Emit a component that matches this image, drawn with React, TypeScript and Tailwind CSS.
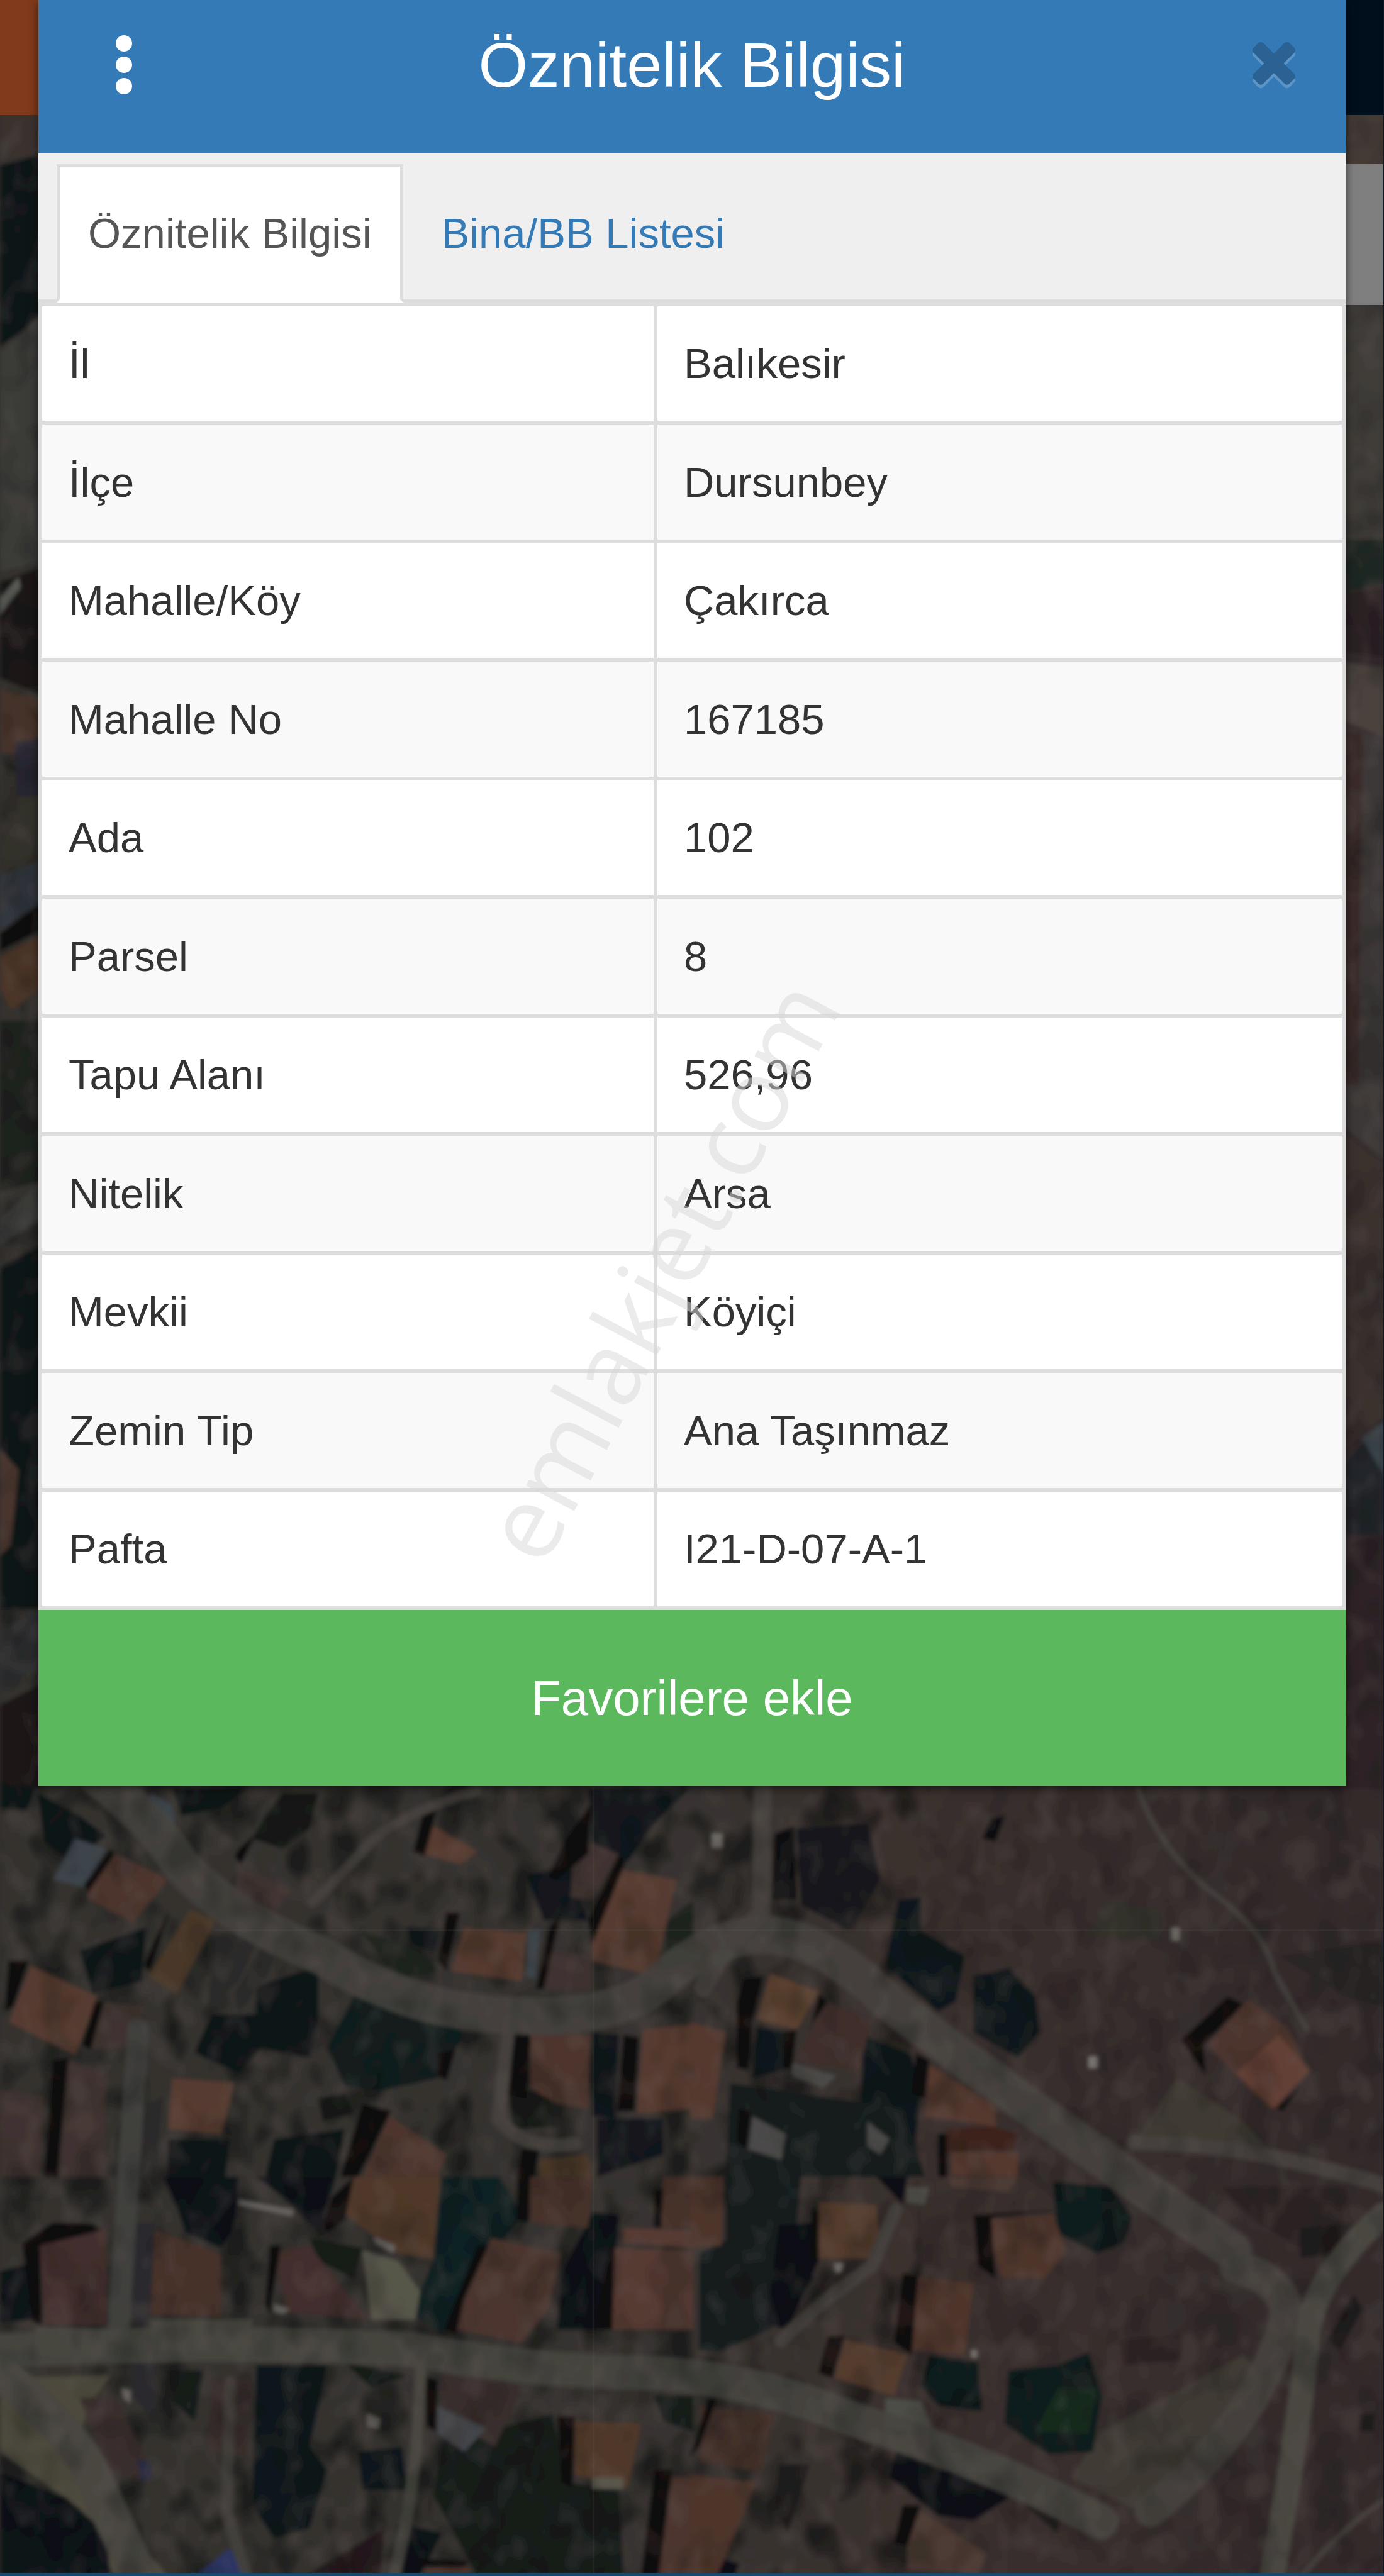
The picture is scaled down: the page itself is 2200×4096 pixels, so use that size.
import { useState } from 'react';

interface Shape {
  fill: string;
  points: string[];
}

interface Attribute {
  label: string;
  value: string;
}

const attributes: Attribute[] = [
  { label: 'İl', value: 'Balıkesir' },
  { label: 'İlçe', value: 'Dursunbey' },
  { label: 'Mahalle/Köy', value: 'Çakırca' },
  { label: 'Mahalle No', value: '167185' },
  { label: 'Ada', value: '102' },
  { label: 'Parsel', value: '8' },
  { label: 'Tapu Alanı', value: '526,96' },
  { label: 'Nitelik', value: 'Arsa' },
  { label: 'Mevkii', value: 'Köyiçi' },
  { label: 'Zemin Tip', value: 'Ana Taşınmaz' },
  { label: 'Pafta', value: 'I21-D-07-A-1' },
];

const tabs = ['Öznitelik Bilgisi', 'Bina/BB Listesi'];

// Satellite tiles: trees, roofs and shadows, each in its tile's own grid
const northWest: Shape[] = [
  { fill: '#0f1517', points: ['85,60 180,150 240,230 160,330 100,250', '0,20 80,40 60,130 0,120', '390,40 560,40 500,120 410,150', '480,930 580,930 590,1060 540,1160 440,1080', '580,820 720,740 720,950 700,1100 580,1060', '180,680 330,590 320,800 210,850', '620,1420 780,1380 760,1568 600,1568', '380,1420 520,1420 510,1568 380,1568'] },
  { fill: '#131814', points: ['640,60 720,60 700,200 640,280 570,240 600,150', '1150,1230 1240,1230 1260,1370 1160,1380', '720,1260 780,1240 800,1320 730,1350'] },
  { fill: '#12181b', points: ['1330,40 1560,40 1480,180 1420,330 1340,260', '1190,380 1290,350 1330,560 1230,560', '1350,1340 1500,1340 1500,1480 1350,1568', '1340,1000 1400,1010 1390,1340 1340,1330', '920,590 1000,600 980,690 930,650'] },
  { fill: '#121d1c', points: ['800,860 960,880 1050,1010 990,1180 860,1230 780,1210 740,1060'] },
  { fill: '#20251f', points: ['820,610 900,640 960,700 990,760 900,790', '1510,560 1568,480 1568,720 1500,760'] },
  { fill: '#2b2a29', points: ['490,610 590,610 540,800 470,900', '600,640 640,640 600,790 540,930 530,850', '270,1350 370,1250 350,1568 240,1568'] },
  { fill: '#4e362e', points: ['250,290 380,400 300,570 195,470', '880,1330 1010,1480 990,1568 820,1568', '1200,1010 1335,1010 1330,1300 1260,1280 1200,1220'] },
  { fill: '#4a3829', points: ['430,520 490,560 400,850 335,780', '1220,1500 1330,1480 1340,1568 1220,1568'] },
  { fill: '#3f3330', points: ['540,350 660,440 620,540 530,460', '1230,680 1340,700 1340,840 1225,830', '1300,230 1400,300 1340,480 1290,470', '230,880 330,900 290,1060 200,1060', '150,1110 240,1160 240,1568 135,1568', '0,1230 100,1250 90,1568 0,1568'] },
  { fill: '#573b30', points: ['980,190 1080,290 1040,340 960,300', '1400,360 1530,400 1480,780 1340,720 1340,650', '1050,590 1190,610 1180,800 1020,760', '70,740 220,860 170,1090 20,960', '1455,990 1568,970 1568,1300 1440,1320', '390,1180 530,1200 500,1400 380,1380'] },
  { fill: '#3c444b', points: ['170,240 240,280 190,430 120,400', '340,60 390,110 400,220 330,200', '1195,600 1222,600 1210,790 1190,780'] },
  { fill: '#0c0707', points: ['960,120 990,110 960,310 935,290', '1280,240 1338,100 1330,300 1260,400 1240,390', '1400,300 1415,330 1340,650 1330,560', '1010,530 1040,530 1010,760 990,720', '1240,600 1270,520 1230,830 1212,830', '540,280 580,220 545,340 530,310', '250,280 260,300 200,450 190,420', '360,600 385,520 340,760 325,740', '20,720 65,720 30,900 10,920', '215,880 235,880 205,1070 185,1050', '120,1110 155,1100 130,1568 100,1568', '1160,1000 1200,1010 1190,1260 1150,1250', '1410,1010 1445,1020 1435,1310 1395,1310', '820,1280 885,1310 810,1568 770,1568', '990,1080 1030,1070 1010,1190 990,1170', '1180,1460 1220,1460 1210,1568 1170,1568'] },
];

const northEast: Shape[] = [
  { fill: '#32312b', points: ['940,480 1060,520 1060,640 900,620'] },
  { fill: '#3f3a33', points: ['1100,1180 1250,1350 1300,1450 1000,1440'] },
  { fill: '#18191d', points: ['240,200 400,180 430,400 360,600 250,500'] },
  { fill: '#2a2626', points: ['1330,700 1568,640 1568,900 1480,860'] },
  { fill: '#0b0d0f', points: ['190,220 235,190 240,480 185,480', '680,160 710,150 690,250 660,240'] },
  { fill: '#10191b', points: ['470,480 520,470 520,600 620,700 600,880 560,920 440,740', '640,780 720,750 780,860 790,1000 740,1100 640,1000', '390,1010 500,1090 520,1250 500,1568 380,1568', '150,980 220,1000 230,1140 140,1180'] },
  { fill: '#141c1c', points: ['90,1200 480,1300 530,1568 80,1568'] },
  { fill: '#4b4a48', points: ['230,1120 330,1170 300,1220 230,1170', '140,1330 215,1400 205,1500 130,1460', '400,1350 450,1420 430,1480 400,1450'] },
  { fill: '#5b4130', points: ['180,770 290,840 240,990 150,950'] },
  { fill: '#402f2c', points: ['310,880 410,960 380,1150 240,1110 270,1000'] },
  { fill: '#54392f', points: ['540,1130 690,1290 690,1370 530,1330', '0,960 80,1000 50,1340 0,1340', '590,1470 740,1470 740,1568 590,1560'] },
  { fill: '#4c342d', points: ['1260,870 1350,980 1400,1160 1310,1300 1235,1170 1170,1050'] },
  { fill: '#633f35', points: ['1330,1010 1400,1150 1320,1300 1235,1160'] },
  { fill: '#3c221b', points: ['580,1380 680,1370 740,1400 730,1460 580,1470'] },
  { fill: '#0d0707', points: ['1215,860 1250,890 1160,1050 1165,1170 1110,1030', '120,790 165,780 140,960 130,1150 105,1140 105,880', '290,850 310,880 270,980 270,1000', '510,1080 540,1110 530,1260 500,1240', '560,1400 580,1400 580,1568 560,1568', '1380,1210 1340,1310 1325,1300', '210,1000 240,990 230,1140 210,1140', '110,1300 135,1310 125,1460 105,1430'] },
  { fill: '#77736e', points: ['900,1095 920,1095 920,1140 900,1140', '1088,590 1106,590 1106,640 1088,640', '48,220 72,220 72,275 48,275'] },
];

const southWest: Shape[] = [
  { fill: '#4d4a3d', points: ['0,790 250,780 200,900 180,1010 240,1300 380,1568 260,1568 180,1300 0,1080'] },
  { fill: '#48473f', points: ['340,560 570,560 570,700 340,680', '80,590 240,600 240,720 80,700'] },
  { fill: '#0d1217', points: ['370,0 540,0 530,200 500,280 420,220 400,120', '1340,140 1400,150 1380,600 1260,600 1270,380', '0,370 70,340 90,560 0,570', '0,1160 150,1260 240,1400 250,1568 0,1568', '900,1360 1000,1400 950,1568 890,1568', '580,0 760,0 720,220 640,80'] },
  { fill: '#102021', points: ['1000,0 1130,0 1180,150 1040,480 1000,620 930,540 980,330'] },
  { fill: '#141b19', points: ['380,760 460,760 440,960 390,880', '700,240 820,280 800,400 720,330', '780,730 920,780 840,830', '1000,1050 1250,930 1280,1200 1400,1230 1410,1568 1080,1568 980,1250', '1480,860 1568,860 1568,1000 1500,960'] },
  { fill: '#10181a', points: ['580,740 740,740 700,1060 740,1150 700,1380 620,1420 570,1290', '810,1080 910,1060 920,1230 820,1230'] },
  { fill: '#503829', points: ['800,0 995,0 980,320 900,300 775,140', '1300,960 1450,970 1420,1220 1300,1170'] },
  { fill: '#432f2d', points: ['90,260 240,200 240,580 100,580', '620,300 700,270 830,560 650,530'] },
  { fill: '#47322b', points: ['350,210 450,270 500,310 500,550 340,540', '1195,0 1340,0 1330,200 1200,180', '1500,0 1568,0 1568,200 1490,200'] },
  { fill: '#4c362f', points: ['1110,240 1270,300 1240,520 1180,650 1035,600 1050,480', '1520,1180 1568,1180 1568,1568 1490,1568', '960,1540 1060,1530 1060,1568 960,1568'] },
  { fill: '#553a33', points: ['1390,280 1568,290 1568,600 1385,600', '1410,200 1568,210 1568,280 1410,260'] },
  { fill: '#392e2d', points: ['1000,730 1180,830 1120,1060 1000,940', '180,870 260,860 330,1100 340,1200 240,1150', '480,790 570,790 560,1100 470,1080'] },
  { fill: '#241a1b', points: ['690,1568 870,1380 860,1568'] },
  { fill: '#2a2a2e', points: ['290,180 350,180 340,540 320,610 295,540', '300,700 350,720 350,960 300,860'] },
  { fill: '#57564a', points: ['820,290 900,330 950,450 940,560 840,560', '1340,1180 1410,1180 1410,1225 1340,1225'] },
  { fill: '#66625f', points: ['540,90 665,130 660,155 540,110', '845,235 895,270 890,300 850,260', '830,930 860,950 855,990 830,980', '275,830 295,840 295,890 280,870', '620,500 655,520 640,540 620,530'] },
  { fill: '#45474b', points: ['990,900 1100,990 1050,1080 990,1010', '1480,1270 1510,1260 1490,1440 1470,1430'] },
  { fill: '#2c3563', points: ['440,1568 520,1460 560,1568'] },
  { fill: '#262840', points: ['310,1110 340,1120 345,1180 320,1200'] },
  { fill: '#0d0809', points: ['730,180 750,80 800,0 780,170 740,220', '50,260 120,180 210,185 230,210 90,270 95,580 75,570', '610,270 635,270 610,540 600,500', '1080,270 1105,270 1050,480 1030,620 1005,600', '1380,280 1390,290 1385,600 1345,590', '1170,0 1200,0 1195,180 1170,170', '960,780 990,800 985,1000 965,980', '1260,940 1300,940 1295,1220 1270,1200', '1480,1150 1520,1150 1490,1568 1450,1568', '950,1500 1060,1510 1050,1530 950,1530', '970,690 1005,700 990,760 960,760', '1480,50 1500,50 1495,200 1480,200'] },
];

const southEast: Shape[] = [
  { fill: '#3f3a34', points: ['930,1000 1250,700 1300,800 1000,1300 860,1180'] },
  { fill: '#2c2323', points: ['1200,40 1480,40 1500,180 1400,300 1280,180', '970,640 1110,620 1110,720 980,740'] },
  { fill: '#141c1d', points: ['80,0 250,0 240,200 280,400 180,600 60,690 20,680 20,300 80,250'] },
  { fill: '#0b1013', points: ['200,190 280,180 290,330 220,600 170,580', '470,1050 560,1150 700,1180 720,1260 640,1350 560,1330 450,1180', '0,1460 110,1520 100,1568 10,1568', '420,0 490,0 480,110'] },
  { fill: '#101b1b', points: ['820,20 950,40 1000,160 980,260 920,300 830,220', '540,700 650,730 660,920 560,900 520,820', '720,760 830,740 900,690 930,860 910,1080 810,1090 710,970'] },
  { fill: '#152a1e', points: ['830,830 920,830 900,1010 780,1000'] },
  { fill: '#1f1c1c', points: ['1380,200 1500,180 1460,300 1380,320', '340,990 420,1020 400,1090', '750,1280 840,1300 830,1400', '1440,640 1500,460 1520,520 1470,680', '200,1130 270,1130 220,1400 190,1300', '1515,930 1545,930 1545,1000 1515,1000'] },
  { fill: '#553c2e', points: ['290,100 420,110 430,320 290,320', '350,640 490,700 460,860 325,790'] },
  { fill: '#4e352c', points: ['670,170 820,150 850,290 800,400 700,390', '510,390 640,420 620,700 500,680', '0,1170 150,1200 60,1568 0,1568', '0,0 75,0 70,270 0,280'] },
  { fill: '#4d3a34', points: ['520,1310 670,1480 650,1560 490,1540 490,1450', '580,0 740,0 720,60 590,40'] },
  { fill: '#42302a', points: ['20,900 190,930 160,1160 20,1120'] },
  { fill: '#0e0808', points: ['640,150 830,130 680,160 690,400 650,350', '480,380 515,390 500,700 460,650', '310,630 350,620 320,790 290,770', '480,1290 520,1290 490,1450 460,1440', '275,120 290,140 290,340 270,300', '40,870 60,870 20,1060 0,1100'] },
  { fill: '#4d4d47', points: ['490,40 540,40 530,110 490,100', '440,870 520,880 550,1000 440,990', '560,1080 720,1100 690,1160 590,1150'] },
  { fill: '#77736e', points: ['325,340 345,340 340,375 328,375', '635,680 648,680 648,710 635,710'] },
];

const westEdge: Shape[] = [
  { fill: '#3a322f', points: ['0,0 220,0 220,40 0,45'] },
  { fill: '#0d1417', points: ['0,50 220,40 220,190 0,220'] },
  { fill: '#3b3b38', points: ['0,225 220,190 220,420 0,430'] },
  { fill: '#1a1516', points: ['0,440 220,425 220,545 0,530'] },
  { fill: '#5a5c57', points: ['0,455 100,435 110,445 0,470'] },
  { fill: '#46322a', points: ['0,540 220,550 220,600 0,600'] },
  { fill: '#33302c', points: ['0,610 220,630 220,715 0,720'] },
  { fill: '#2a2833', points: ['80,590 220,585 220,640 90,640'] },
  { fill: '#33373f', points: ['0,715 220,700 220,740 0,765'] },
  { fill: '#0c0808', points: ['0,768 220,740 220,765 0,785'] },
  { fill: '#4a3427', points: ['0,790 220,770 220,820 60,840 0,820'] },
  { fill: '#1e201d', points: ['0,850 220,850 220,1000 0,1010'] },
  { fill: '#3b3b39', points: ['0,1035 220,1000 220,1035 0,1060'] },
  { fill: '#0f1517', points: ['0,1080 220,1060 220,1400 0,1400'] },
  { fill: '#48352e', points: ['0,1250 100,1270 60,1340 0,1350'] },
  { fill: '#2c2e2f', points: ['0,1420 220,1400 220,1450 0,1480'] },
  { fill: '#1d1817', points: ['0,1490 220,1470 220,1568 0,1568'] },
];

const eastEdge: Shape[] = [
  { fill: '#443a35', points: ['30,0 240,0 240,60 30,60'] },
  { fill: '#3f3c38', points: ['30,180 240,180 240,400 30,400'] },
  { fill: '#202823', points: ['30,400 240,400 240,440 30,450'] },
  { fill: '#2b2124', points: ['30,450 240,445 240,510 30,505'] },
  { fill: '#4a423d', points: ['30,515 240,520 240,585 30,570'] },
  { fill: '#3d3837', points: ['30,575 240,585 240,980 30,950'] },
  { fill: '#3a2b29', points: ['30,580 125,580 100,910 30,910'] },
  { fill: '#3a302e', points: ['30,955 240,985 240,1220 30,1250'] },
  { fill: '#22252a', points: ['30,1265 240,1220 240,1330 30,1330'] },
  { fill: '#39434a', points: ['120,1240 240,1225 240,1275'] },
  { fill: '#2e2427', points: ['30,1340 240,1330 240,1568 30,1568'] },
];

function Tile({ shapes, transform }: { shapes: Shape[]; transform: string }) {
  return (
    <g transform={transform}>
      {shapes.map((shape) =>
        shape.points.map((points) => <polygon key={points} points={points} fill={shape.fill} />)
      )}
    </g>
  );
}

function SatelliteMap() {
  return (
    <svg
      className="absolute inset-0 h-full w-full"
      viewBox="0 0 842 1568"
      preserveAspectRatio="none"
      aria-hidden="true"
    >
      <defs>
        <linearGradient id="ground" x1="0" x2="1" y1="0" y2="0">
          <stop offset="0" stopColor="#34322f" />
          <stop offset="0.5" stopColor="#373330" />
          <stop offset="0.65" stopColor="#3a302e" />
          <stop offset="1" stopColor="#342b2c" />
        </linearGradient>
        <filter id="soften" x="0" y="0" width="1" height="1">
          <feGaussianBlur stdDeviation="1.3" />
        </filter>
        <filter id="darkGrain" x="0" y="0" width="1" height="1" colorInterpolationFilters="sRGB">
          <feTurbulence type="fractalNoise" baseFrequency="0.045 0.035" numOctaves="2" seed="4" />
          <feColorMatrix values="0 0 0 0 0.05  0 0 0 0 0.06  0 0 0 0 0.06  4 0 0 0 -1.9" />
        </filter>
        <filter id="lightGrain" x="0" y="0" width="1" height="1" colorInterpolationFilters="sRGB">
          <feTurbulence type="fractalNoise" baseFrequency="0.07 0.05" numOctaves="2" seed="11" />
          <feColorMatrix values="0 0 0 0 0.42  0 0 0 0 0.37  0 0 0 0 0.35  4 0 0 0 -2" />
        </filter>
      </defs>
      <rect width="842" height="1568" fill="url(#ground)" />
      <g filter="url(#soften)">
        <rect width="842" height="1568" fill="url(#ground)" />
        <rect width="560" height="1568" filter="url(#darkGrain)" opacity="0.45" />
        <Tile shapes={westEdge} transform="translate(0 68) scale(0.1134 0.651)" />
        <Tile shapes={eastEdge} transform="translate(814.8 68) scale(0.1134 0.651)" />
        <Tile shapes={northWest} transform="translate(0 1082) scale(0.269 0.155)" />
        <Tile shapes={northEast} transform="translate(420.1 1082) scale(0.269 0.155)" />
        <Tile shapes={southWest} transform="translate(0 1325) scale(0.269 0.155)" />
        <Tile shapes={southEast} transform="translate(420.1 1325) scale(0.269 0.155)" />
        <g fill="none" strokeLinecap="round" strokeLinejoin="round">
          <g stroke="#484640">
            <path d="M0 1445 Q45 1480 58 1510 T85 1568" strokeWidth="22" />
            <path d="M842 1348 Q800 1385 796 1420 Q790 1480 774 1568" strokeWidth="15" />
            <path d="M752 1380 Q790 1390 780 1420 Q760 1480 700 1528" strokeWidth="20" strokeOpacity="0.8" />
            <path d="M256 1440 Q254 1500 246 1540 L240 1568" strokeWidth="7" />
            <path d="M140 1450 L138 1530 L150 1568" strokeWidth="7" strokeOpacity="0.7" />
          </g>
          <g stroke="#45413d">
            <path d="M290 1090 Q240 1105 222 1125 T190 1158" strokeWidth="6" />
            <path d="M464 1090 L463 1165 Q440 1185 428 1210" strokeWidth="11" />
            <path d="M842 1330 Q800 1318 770 1312 T690 1304" strokeWidth="9" />
            <path d="M475 1425 Q500 1400 530 1380 L545 1345" strokeWidth="8" />
            <path d="M692 1088 Q705 1125 735 1150 Q770 1175 775 1200 L795 1235" strokeWidth="3" />
            <path d="M842 1522 Q815 1540 792 1568" strokeWidth="3" />
            <path d="M310 1230 L303 1290 Q320 1310 350 1305" strokeWidth="8" />
          </g>
          <path d="M84 1235 Q78 1330 72 1420" stroke="#403f3d" strokeWidth="13" />
          <path
            d="M60 1082 Q95 1110 110 1135 Q140 1168 195 1190 Q245 1222 300 1226 Q370 1232 400 1208 Q435 1175 470 1178 Q500 1180 540 1218 Q600 1265 750 1370"
            stroke="#464440"
            strokeOpacity="0.85"
            strokeWidth="23"
          />
          <path
            d="M0 1431 Q120 1424 250 1430 Q310 1442 380 1444 Q450 1444 520 1473 Q600 1498 670 1535"
            stroke="#474640"
            strokeOpacity="0.9"
            strokeWidth="21"
          />
        </g>
        <rect width="842" height="1568" filter="url(#darkGrain)" opacity="0.22" />
        <rect width="842" height="1568" filter="url(#lightGrain)" opacity="0.2" />
      </g>
      <path d="M361 1088 V1568 M130 1175 H842" stroke="#6b6864" strokeOpacity="0.12" fill="none" />
    </svg>
  );
}

function CloseIcon() {
  return (
    <svg className="h-[68px] w-[68px] overflow-visible" viewBox="110 -1322 1188 1188" aria-hidden="true">
      {[100, 0].map((offset) => (
        <path
          key={offset}
          transform={`translate(0 ${offset - 84})`}
          fill={offset ? '#5c95c6' : '#296293'}
          d="M1298 -322q0 40 -28 68l-136 136q-28 28 -68 28t-68 -28l-294 -294l-294 294q-28 28 -68 28t-68 -28l-136 -136q-28 -28 -28 -68t28 -68l294 -294l-294 -294q-28 -28 -28 -68t28 -68l136 -136q28 -28 68 -28t68 28l294 294l294 -294q28 -28 68 -28t68 28l136 136q28 28 28 68t-28 68l-294 294l294 294q28 28 28 68z"
        />
      ))}
    </svg>
  );
}

export default function App() {
  const [activeTab, setActiveTab] = useState(tabs[0]);

  return (
    <div className="relative min-h-screen overflow-hidden bg-[#332e2c] font-['Liberation_Sans',Arial,sans-serif]">
      <SatelliteMap />

      {/* dimmed page behind the dialog */}
      <div className="absolute inset-x-0 top-0 flex h-[183px]">
        <div className="flex-1 bg-[#813a1b]" />
        <div className="flex-1 bg-[#010f1c]" />
      </div>
      <div className="absolute top-[261px] right-0 h-[224px] w-[400px] bg-[#7f7f7f]" />
      <div className="absolute inset-y-0 right-0 w-px bg-[#0c1a28]" />
      <div className="absolute inset-x-0 bottom-0 h-1 bg-[#164970]" />

      <div role="dialog" aria-labelledby="dialog-title" className="relative mx-[61px] shadow-[0_4px_14px_rgba(0,0,0,0.6)]">
        <header className="grid grid-cols-[1fr_auto_1fr] bg-[#337ab7] pt-[30px] pr-20 pb-[68px] pl-[123px]">
          <button type="button" aria-label="Menü" className="flex items-center justify-self-start">
            <svg className="h-[94px] w-[26px]" viewBox="0 0 26 94" fill="#fff" aria-hidden="true">
              <circle cx="13" cy="13" r="13" />
              <circle cx="13" cy="47" r="13" />
              <circle cx="13" cy="81" r="13" />
            </svg>
          </button>
          <h1 id="dialog-title" className="pr-[43px] text-[101px] leading-[146px] text-white">
            Öznitelik Bilgisi
          </h1>
          <button type="button" aria-label="Kapat" className="flex items-center justify-self-end">
            <CloseIcon />
          </button>
        </header>

        <div role="tablist" className="flex gap-[11px] border-b-[5px] border-[#ddd] bg-[#efefef] pt-[17px] pl-[29px]">
          {tabs.map((tab) => (
            <button
              key={tab}
              type="button"
              role="tab"
              aria-selected={tab === activeTab}
              onClick={() => setActiveTab(tab)}
              className={`-mb-[5px] border-[5px] px-[45px] py-14 text-[67px] leading-[98px] ${
                tab === activeTab
                  ? 'border-[#ddd] border-b-white bg-white text-[#555]'
                  : 'border-transparent text-[#337ab7]'
              }`}
            >
              {tab}
            </button>
          ))}
        </div>

        <table className="w-full border-collapse bg-white text-[67px] leading-[98px] text-[#333]">
          <tbody>
            {attributes.map((attribute) => (
              <tr key={attribute.label} className="even:h-[189px] even:bg-[#f9f9f9]">
                <th scope="row" className="w-[47.2%] border-[6px] border-[#ddd] px-[42px] py-[42px] text-left font-normal">
                  {attribute.label}
                </th>
                <td className="border-[6px] border-[#ddd] px-[42px] py-[42px]">{attribute.value}</td>
              </tr>
            ))}
          </tbody>
        </table>

        <button type="button" className="block w-full bg-[#5cb85c] py-[87px] text-[78px] leading-[106px] text-white">
          Favorilere ekle
        </button>
      </div>

      <div className="pointer-events-none absolute top-[2018px] left-[1046px] -translate-1/2 -rotate-[62deg] font-['Open_Sans',sans-serif] text-[162px] leading-none whitespace-nowrap text-[#d9d9d9] opacity-50">
        emlakjet.com
      </div>
    </div>
  );
}
